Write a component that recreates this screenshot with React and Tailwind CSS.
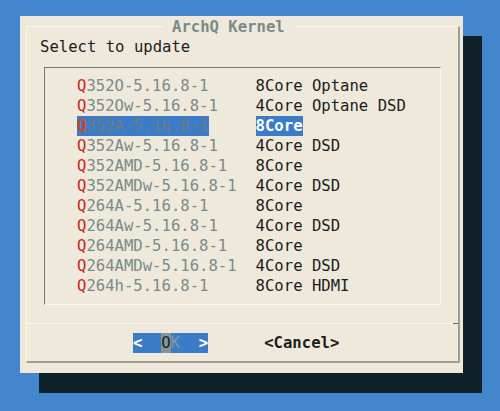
import React from "react";

const kernels = [
  ["352O-5.16.8-1", "8Core Optane"],
  ["352Ow-5.16.8-1", "4Core Optane DSD"],
  ["352A-5.16.8-1", "8Core"],
  ["352Aw-5.16.8-1", "4Core DSD"],
  ["352AMD-5.16.8-1", "8Core"],
  ["352AMDw-5.16.8-1", "4Core DSD"],
  ["264A-5.16.8-1", "8Core"],
  ["264Aw-5.16.8-1", "4Core DSD"],
  ["264AMD-5.16.8-1", "8Core"],
  ["264AMDw-5.16.8-1", "4Core DSD"],
  ["264h-5.16.8-1", "8Core HDMI"],
];

const selected = 2;

function KernelRow({ name, desc, active }) {
  return (
    <div className="flex h-[20px] items-center whitespace-pre">
      <div className="w-[178.6px]">
        <span className={active ? "bg-[#3b7cc9] inline-block w-[131.6px]" : ""}>
          <span className={active ? "text-[#d2461c] font-bold" : "text-[#c8261b]"}>Q</span>
          <span className={active ? "text-[#6f7b7c]" : "text-[#7b898a]"}>{name}</span>
        </span>
      </div>
      <span className={active ? "bg-[#3b7cc9] text-white font-bold" : "text-[#1c1c1c]"}>
        {desc}
      </span>
    </div>
  );
}

export default function App() {
  return (
    <div
      className="w-[500px] h-[411px] bg-[#4486cc] overflow-hidden pt-[16px] pl-[20px] text-[15.6px] leading-[20px]"
      style={{ fontFamily: '"DejaVu Sans Mono", monospace' }}
    >
      {/* dialog */}
      <div className="w-[443px] h-[357px] bg-[#eee9da] shadow-[19px_20px_0_0_#0f2129] pt-[10px] pl-[6px] pr-[3px] pb-[10px]">
        <div className="relative h-full border-t border-l border-[#faf7ee] border-r-2 border-b-2 border-r-[#a19d92] border-b-[#a19d92] flex flex-col">
          {/* title */}
          <div className="absolute -top-[10px] left-[136px] flex">
            <span className="bg-[#eee9da] px-[9px] font-bold text-[#7b898a]">ArchQ Kernel</span>
          </div>

          <div className="pt-[10px] pl-[13px] text-[#1c1c1c]">Select to update</div>

          {/* list */}
          <div className="mt-[10px] mx-[17px] border-t border-l border-[#76746c] border-r border-b border-r-[#faf7ee] border-b-[#faf7ee] pt-[8px] pb-[8px] pl-[32px]">
            {kernels.map(([name, desc], i) => (
              <KernelRow key={name} name={name} desc={desc} active={i === selected} />
            ))}
          </div>

          <div className="flex-1" />

          {/* separator */}
          <div className="flex items-center">
            <div className="flex-1 h-px bg-[#faf7ee]" />
            <div className="w-[5px] h-px bg-[#6a675f]" />
          </div>

          {/* buttons */}
          <div className="flex pt-[9px] pb-[8px] pl-[106px] gap-[56px] whitespace-pre">
            <div className="bg-[#3b7cc9] h-[20px] w-[75.2px] flex">
              <span className="text-white font-bold">{"<  "}</span>
              <span className="bg-[#8a9494] text-[#0f2330]">O</span>
              <span className="text-[#8a9494]">{"K  "}</span>
              <span className="text-white font-bold">{">"}</span>
            </div>
            <div className="font-bold text-[#1c1c1c]">{"<Cancel>"}</div>
          </div>
        </div>
      </div>
    </div>
  );
}
